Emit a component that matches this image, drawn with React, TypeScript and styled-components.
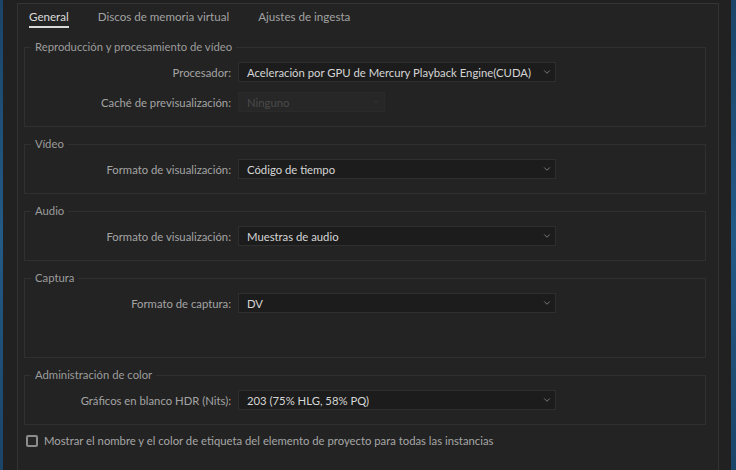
import React from "react";
import styled, { createGlobalStyle } from "styled-components";
import { ChevronDown } from "lucide-react";

const Global = createGlobalStyle`
  html, body { margin: 0; padding: 0; background: #1f1f1f; }
  body { font-family: Lato, "Open Sans", sans-serif; font-size: 11.3px; }
  * { box-sizing: border-box; }
`;

const Frame = styled.div`
  display: flex;
  width: 736px;
  height: 470px;
  overflow: hidden;
  background: #202020;
`;

const Strip = styled.div<{ $w: number }>`
  width: ${(p) => p.$w}px;
  flex: none;
  background: linear-gradient(180deg, #1b4468, #235a86 50%, #1b4468);
`;

const Gutter = styled.div<{ $w: number }>`
  width: ${(p) => p.$w}px;
  flex: none;
  background: #212121;
`;

const Panel = styled.div`
  flex: 1;
  margin-top: 3px;
  border: 1px solid #343434;
  border-bottom: none;
  background: #232323;
  display: flex;
  flex-direction: column;
  padding: 0 12px 0 6px;
`;

const Tabs = styled.div`
  display: flex;
  gap: 29px;
  padding-left: 5px;
  margin-bottom: 12px;
`;

const Tab = styled.div<{ $active?: boolean }>`
  padding-top: 5px;
  padding-bottom: 1px;
  line-height: 16px;
  font-size: 11.6px;
  color: ${(p) => (p.$active ? "#dcdcdc" : "#a2a2a2")};
  border-bottom: 2px solid ${(p) => (p.$active ? "#d8d8d8" : "transparent")};
`;

const Group = styled.fieldset`
  margin: 0 0 10px 0;
  padding: 8px 0 14px 0;
  border: 1px solid #303030;
  display: flex;
  flex-direction: column;
  gap: 10px;
  min-width: 0;
`;

const Legend = styled.legend`
  padding: 0 4px 0 4px;
  margin-left: 6px;
  line-height: 14px;
  color: #9c9c9c;
`;

const Row = styled.div`
  display: flex;
  align-items: center;
  gap: 7px;
  height: 20px;
`;

const Blank = styled.div`
  height: 20px;
`;

const Label = styled.div`
  width: 206px;
  text-align: right;
  color: #a3a3a3;
`;

const Select = styled.div<{ $w: number; $disabled?: boolean }>`
  width: ${(p) => p.$w}px;
  height: 20px;
  display: flex;
  align-items: center;
  justify-content: space-between;
  padding: 0 3px 0 8px;
  background: ${(p) => (p.$disabled ? "#272727" : "#1c1c1c")};
  border: 1px solid ${(p) => (p.$disabled ? "#2a2a2a" : "#2f2f2f")};
  color: ${(p) => (p.$disabled ? "#4a4a4a" : "#d6d6d6")};
  svg { color: ${(p) => (p.$disabled ? "#3c3c3c" : "#b0b0b0")}; }
`;

const CheckRow = styled.label`
  display: flex;
  align-items: center;
  gap: 6px;
  margin-top: -1px;
  padding-left: 2px;
  color: #a6a6a6;
`;

const Box = styled.span`
  width: 12px;
  height: 12px;
  border: 2px solid #8c8c8c;
  border-radius: 2px;
  background: #262626;
`;

type Field = { label: string; value: string; w?: number; disabled?: boolean };

const groups: { title: string; fields: Field[]; blank?: boolean }[] = [
  {
    title: "Reproducción y procesamiento de vídeo",
    fields: [
      { label: "Procesador:", value: "Aceleración por GPU de Mercury Playback Engine(CUDA)" },
      { label: "Caché de previsualización:", value: "Ninguno", w: 147, disabled: true },
    ],
  },
  { title: "Vídeo", fields: [{ label: "Formato de visualización:", value: "Código de tiempo" }] },
  { title: "Audio", fields: [{ label: "Formato de visualización:", value: "Muestras de audio" }] },
  { title: "Captura", fields: [{ label: "Formato de captura:", value: "DV" }], blank: true },
  {
    title: "Administración de color",
    fields: [{ label: "Gráficos en blanco HDR (Nits):", value: "203 (75% HLG, 58% PQ)" }],
  },
];

export default function App() {
  return (
    <>
      <Global />
      <Frame>
        <Strip $w={3} />
        <Gutter $w={14} />
        <Panel>
          <Tabs>
            <Tab $active>General</Tab>
            <Tab>Discos de memoria virtual</Tab>
            <Tab>Ajustes de ingesta</Tab>
          </Tabs>
          {groups.map((g) => (
            <Group key={g.title}>
              <Legend>{g.title}</Legend>
              {g.fields.map((f) => (
                <Row key={f.label}>
                  <Label>{f.label}</Label>
                  <Select $w={f.w ?? 318} $disabled={f.disabled}>
                    <span>{f.value}</span>
                    <ChevronDown size={10} strokeWidth={1.5} />
                  </Select>
                </Row>
              ))}
              {g.blank && <Blank />}
            </Group>
          ))}
          <CheckRow>
            <Box />
            Mostrar el nombre y el color de etiqueta del elemento de proyecto para todas las instancias
          </CheckRow>
        </Panel>
        <Gutter $w={12} />
        <Strip $w={5} />
      </Frame>
    </>
  );
}
